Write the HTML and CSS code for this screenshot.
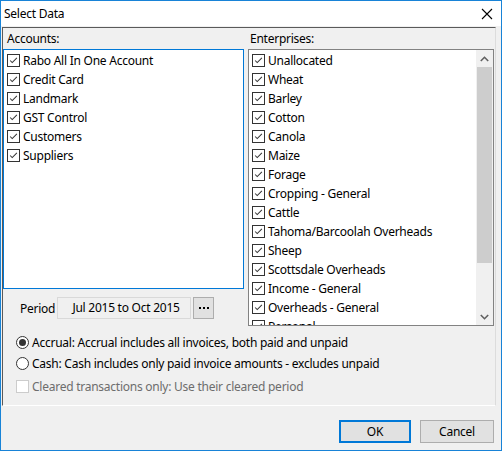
FILE: index.html
```html
<!DOCTYPE html>
<html>
<head>
<meta charset="utf-8">
<link rel="stylesheet" href="styles.css">
</head>
<body>
<div class="window">
  <div class="titlebar">
    <span class="title">Select Data</span>
    <svg class="close" width="12" height="12" viewBox="0 0 12 12"><path d="M1 1L11 11M11 1L1 11" stroke="#000" stroke-width="1.1" fill="none"/></svg>
  </div>
  <div class="panel">
    <div class="columns">
      <div class="col left">
        <div class="label">Accounts:</div>
        <div class="list accounts">
          <div class="item"><span class="cb"><svg viewBox="0 0 13 13"><path d="M2.5 6.5L5 9L10.5 3.5" stroke="#333" stroke-width="1.2" fill="none"/></svg></span>Rabo All In One Account</div>
          <div class="item"><span class="cb"><svg viewBox="0 0 13 13"><path d="M2.5 6.5L5 9L10.5 3.5" stroke="#333" stroke-width="1.2" fill="none"/></svg></span>Credit Card</div>
          <div class="item"><span class="cb"><svg viewBox="0 0 13 13"><path d="M2.5 6.5L5 9L10.5 3.5" stroke="#333" stroke-width="1.2" fill="none"/></svg></span>Landmark</div>
          <div class="item"><span class="cb"><svg viewBox="0 0 13 13"><path d="M2.5 6.5L5 9L10.5 3.5" stroke="#333" stroke-width="1.2" fill="none"/></svg></span>GST Control</div>
          <div class="item"><span class="cb"><svg viewBox="0 0 13 13"><path d="M2.5 6.5L5 9L10.5 3.5" stroke="#333" stroke-width="1.2" fill="none"/></svg></span>Customers</div>
          <div class="item"><span class="cb"><svg viewBox="0 0 13 13"><path d="M2.5 6.5L5 9L10.5 3.5" stroke="#333" stroke-width="1.2" fill="none"/></svg></span>Suppliers</div>
        </div>
        <div class="period">
          <span class="period-label">Period</span>
          <span class="period-box">Jul 2015 to Oct 2015</span>
          <span class="dots"><i></i><i></i><i></i></span>
        </div>
      </div>
      <div class="col right">
        <div class="label">Enterprises:</div>
        <div class="list enterprises">
          <div class="items">
            <div class="item"><span class="cb"><svg viewBox="0 0 13 13"><path d="M2.5 6.5L5 9L10.5 3.5" stroke="#333" stroke-width="1.2" fill="none"/></svg></span>Unallocated</div>
            <div class="item"><span class="cb"><svg viewBox="0 0 13 13"><path d="M2.5 6.5L5 9L10.5 3.5" stroke="#333" stroke-width="1.2" fill="none"/></svg></span>Wheat</div>
            <div class="item"><span class="cb"><svg viewBox="0 0 13 13"><path d="M2.5 6.5L5 9L10.5 3.5" stroke="#333" stroke-width="1.2" fill="none"/></svg></span>Barley</div>
            <div class="item"><span class="cb"><svg viewBox="0 0 13 13"><path d="M2.5 6.5L5 9L10.5 3.5" stroke="#333" stroke-width="1.2" fill="none"/></svg></span>Cotton</div>
            <div class="item"><span class="cb"><svg viewBox="0 0 13 13"><path d="M2.5 6.5L5 9L10.5 3.5" stroke="#333" stroke-width="1.2" fill="none"/></svg></span>Canola</div>
            <div class="item"><span class="cb"><svg viewBox="0 0 13 13"><path d="M2.5 6.5L5 9L10.5 3.5" stroke="#333" stroke-width="1.2" fill="none"/></svg></span>Maize</div>
            <div class="item"><span class="cb"><svg viewBox="0 0 13 13"><path d="M2.5 6.5L5 9L10.5 3.5" stroke="#333" stroke-width="1.2" fill="none"/></svg></span>Forage</div>
            <div class="item"><span class="cb"><svg viewBox="0 0 13 13"><path d="M2.5 6.5L5 9L10.5 3.5" stroke="#333" stroke-width="1.2" fill="none"/></svg></span>Cropping - General</div>
            <div class="item"><span class="cb"><svg viewBox="0 0 13 13"><path d="M2.5 6.5L5 9L10.5 3.5" stroke="#333" stroke-width="1.2" fill="none"/></svg></span>Cattle</div>
            <div class="item"><span class="cb"><svg viewBox="0 0 13 13"><path d="M2.5 6.5L5 9L10.5 3.5" stroke="#333" stroke-width="1.2" fill="none"/></svg></span>Tahoma/Barcoolah Overheads</div>
            <div class="item"><span class="cb"><svg viewBox="0 0 13 13"><path d="M2.5 6.5L5 9L10.5 3.5" stroke="#333" stroke-width="1.2" fill="none"/></svg></span>Sheep</div>
            <div class="item"><span class="cb"><svg viewBox="0 0 13 13"><path d="M2.5 6.5L5 9L10.5 3.5" stroke="#333" stroke-width="1.2" fill="none"/></svg></span>Scottsdale Overheads</div>
            <div class="item"><span class="cb"><svg viewBox="0 0 13 13"><path d="M2.5 6.5L5 9L10.5 3.5" stroke="#333" stroke-width="1.2" fill="none"/></svg></span>Income - General</div>
            <div class="item"><span class="cb"><svg viewBox="0 0 13 13"><path d="M2.5 6.5L5 9L10.5 3.5" stroke="#333" stroke-width="1.2" fill="none"/></svg></span>Overheads - General</div>
            <div class="item"><span class="cb"><svg viewBox="0 0 13 13"><path d="M2.5 6.5L5 9L10.5 3.5" stroke="#333" stroke-width="1.2" fill="none"/></svg></span>Personal</div>
          </div>
          <div class="scrollbar">
            <div class="arrow"><svg width="9" height="6" viewBox="0 0 9 6"><path d="M0.8 5L4.5 1.3L8.2 5" stroke="#606060" stroke-width="1.6" fill="none"/></svg></div>
            <div class="track"><div class="thumb"></div></div>
            <div class="arrow"><svg width="9" height="6" viewBox="0 0 9 6"><path d="M0.8 1L4.5 4.7L8.2 1" stroke="#606060" stroke-width="1.6" fill="none"/></svg></div>
          </div>
        </div>
      </div>
    </div>
    <div class="options">
      <div class="opt"><span class="radio checked"><span class="dot"></span></span>Accrual: Accrual includes all invoices, both paid and unpaid</div>
      <div class="opt"><span class="radio"></span>Cash: Cash includes only paid invoice amounts - excludes unpaid</div>
      <div class="opt disabled"><span class="cb off"></span>Cleared transactions only: Use their cleared period</div>
    </div>
  </div>
  <div class="footer">
    <button class="btn ok">OK</button>
    <button class="btn cancel">Cancel</button>
  </div>
</div>
</body>
</html>
```

FILE: styles.css
```css
* { box-sizing: border-box; }
html, body { margin: 0; padding: 0; }
body {
  width: 502px;
  height: 451px;
  font-family: "Noto Sans", "Open Sans", sans-serif;
  font-size: 12px;
  letter-spacing: -0.25px;
  color: #000;
  overflow: hidden;
}
.window {
  width: 502px;
  height: 451px;
  border: 1px solid #1883d7;
  background: #f0f0f0;
  display: flex;
  flex-direction: column;
}
.titlebar {
  height: 25px;
  background: #fff;
  display: flex;
  align-items: center;
  justify-content: space-between;
  padding: 0 8px 0 3px;
  flex: none;
}
.title { font-size: 12px; line-height: 16px; }
.close { display: block; }
.panel {
  flex: none;
  height: 379px;
  margin: 1px 5px 0 1px;
  border-top: 1px solid #5a5a5a;
  border-left: 1px solid #5a5a5a;
  border-bottom: 1px solid #fff;
  border-right: 1px solid #dcdcdc;
  display: flex;
  flex-direction: column;
}
.columns {
  display: grid;
  grid-template-columns: 241px 246px;
  column-gap: 4px;
}
.col { display: flex; flex-direction: column; }
.label {
  height: 21px;
  line-height: 21px;
  padding-left: 4px;
}
.right .label { padding-left: 2px; }
.list {
  background: #fff;
  overflow: hidden;
}
.accounts {
  height: 240px;
  border: 1px solid #0078d7;
  padding-top: 1px;
}
.enterprises {
  height: 277px;
  border: 1px solid #828282;
  display: flex;
}
.items { flex: 1; padding-top: 1px; overflow: hidden; }
.item {
  height: 19px;
  display: flex;
  align-items: center;
  padding-left: 3px;
  white-space: nowrap;
}
.cb {
  width: 13px;
  height: 13px;
  border: 1px solid #333;
  background: #fff;
  margin-right: 3px;
  flex: none;
  display: block;
}
.cb svg { display: block; width: 11px; height: 11px; }
.scrollbar {
  width: 17px;
  flex: none;
  background: #f0f0f0;
  display: flex;
  flex-direction: column;
}
.arrow {
  height: 17px;
  display: flex;
  align-items: center;
  justify-content: center;
  flex: none;
}
.track { flex: 1; padding: 0 1px; }
.thumb {
  height: 196px;
  background: #cdcdcd;
}
.period {
  display: flex;
  align-items: center;
  margin-top: 8px;
  height: 22px;
}
.period-label { margin-left: 17px; width: 37px; }
.period-box {
  width: 134px;
  height: 22px;
  border: 1px solid #d9d9d9;
  background: #f0f0f0;
  text-align: center;
  line-height: 20px;
  padding-left: 4px;
}
.dots {
  margin-left: 2px;
  width: 21px;
  height: 22px;
  background: #e1e1e1;
  border: 1px solid #adadad;
  display: flex;
  align-items: center;
  justify-content: center;
  gap: 2px;
}
.dots i {
  display: block;
  width: 2px;
  height: 2px;
  background: #000;
}
.options { margin-top: 6px; padding-left: 13px; }
.opt {
  display: flex;
  align-items: center;
  height: 21px;
  white-space: nowrap;
}
.opt.disabled { margin-top: 2px; color: #6d6d6d; }
.radio {
  width: 13px;
  height: 13px;
  border: 1px solid #333;
  border-radius: 50%;
  background: #fff;
  margin-right: 3px;
  display: flex;
  align-items: center;
  justify-content: center;
  flex: none;
}
.dot { width: 7px; height: 7px; border-radius: 50%; background: #333; }
.cb.off { border-color: #ccc; }
.footer {
  flex: 1;
  display: flex;
  justify-content: flex-end;
  align-items: flex-start;
  padding: 14px 7px 0 0;
  gap: 9px;
}
.btn {
  font-family: inherit;
  font-size: 12px;
  letter-spacing: inherit;
  color: #000;
  height: 23px;
  background: #e1e1e1;
  border: 1px solid #adadad;
  padding: 0;
  margin: 0;
}
.btn.ok { width: 72px; border: 2px solid #0078d7; }
.btn.cancel { width: 74px; }
```
